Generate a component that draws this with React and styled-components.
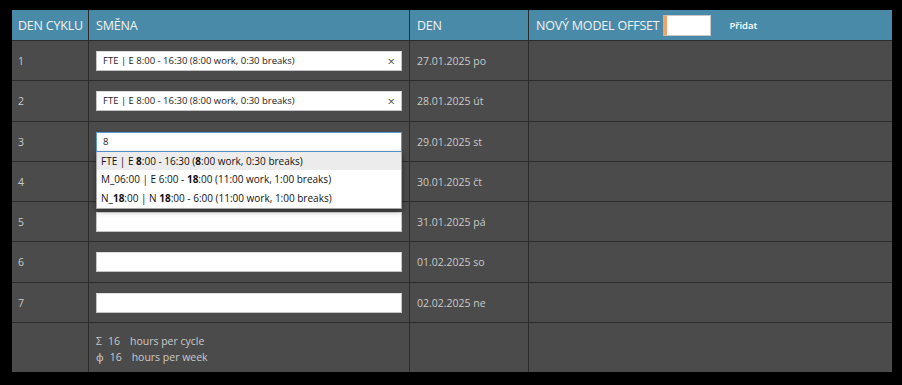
import styled, { createGlobalStyle } from "styled-components";

const GlobalStyle = createGlobalStyle`
  html, body {
    margin: 0;
    background: #000;
    font-family: "Open Sans", "Noto Sans", sans-serif;
  }
  #root {
    padding: 10px 0 0 12px;
  }
`;

const rows = [
  { day: 1, date: "27.01.2025 po", shift: "FTE | E 8:00 - 16:30 (8:00 work, 0:30 breaks)" },
  { day: 2, date: "28.01.2025 út", shift: "FTE | E 8:00 - 16:30 (8:00 work, 0:30 breaks)" },
  { day: 3, date: "29.01.2025 st", shift: "8", open: true },
  { day: 4, date: "30.01.2025 čt" },
  { day: 5, date: "31.01.2025 pá" },
  { day: 6, date: "01.02.2025 so" },
  { day: 7, date: "02.02.2025 ne" },
];

const options = [
  [["FTE | E ", false], ["8", true], [":00 - 16:30 (", false], ["8", true], [":00 work, 0:30 breaks)", false]],
  [["M_06:00 | E 6:00 - ", false], ["18", true], [":00 (11:00 work, 1:00 breaks)", false]],
  [["N_", false], ["18", true], [":00 | N ", false], ["18", true], [":00 - 6:00 (11:00 work, 1:00 breaks)", false]],
];

const App = () => {
  return (
    <>
      <GlobalStyle />
      <Table>
        <HeadCell>DEN CYKLU</HeadCell>
        <HeadCell>SMĚNA</HeadCell>
        <HeadCell>DEN</HeadCell>
        <HeadCell>
          NOVÝ MODEL OFFSET
          <OffsetInput />
          <AddButton>Přidat</AddButton>
        </HeadCell>
        {rows.map((r) => (
          <Row key={r.day}>
            <Cell>{r.day}</Cell>
            <ShiftCell>
              <Select $focused={r.open}>
                <SelectText>{r.shift || ""}</SelectText>
                {r.shift && !r.open && <Clear>×</Clear>}
              </Select>
              {r.open && (
                <Dropdown>
                  {options.map((opt, i) => (
                    <Option key={i} $active={i === 0}>
                      {opt.map(([t, b], j) => (b ? <b key={j}>{t}</b> : <span key={j}>{t}</span>))}
                    </Option>
                  ))}
                </Dropdown>
              )}
            </ShiftCell>
            <Cell>{r.date}</Cell>
            <Cell />
          </Row>
        ))}
        <FooterRow>
          <Cell />
          <Cell>
            <Sum>
              <span>Σ</span>
              <span>16</span>
              <span>hours per cycle</span>
            </Sum>
            <Sum>
              <span>ϕ</span>
              <span>16</span>
              <span>hours per week</span>
            </Sum>
          </Cell>
          <Cell />
          <Cell />
        </FooterRow>
      </Table>
    </>
  );
};

export default App;

const Table = styled.div`
  width: 880px;
  display: grid;
  grid-template-columns: 76px 321px 119px 364px;
  background: #4b4b4b;
`;

const HeadCell = styled.div`
  height: 30px;
  box-sizing: border-box;
  background: #4a8aa9;
  color: #f2f2f2;
  font-size: 12.5px;
  letter-spacing: -0.2px;
  white-space: nowrap;
  padding: 0 7px;
  display: flex;
  align-items: center;
  border-left: 1px solid #2b2b2b;
  &:first-child {
    border-left: none;
    padding-left: 6px;
  }
`;

const OffsetInput = styled.div`
  width: 43px;
  height: 19px;
  margin-left: 3px;
  background: #fff;
  border: 1px solid #c8c8c8;
  border-left: 4px solid #efa56a;
`;

const AddButton = styled.span`
  margin-left: 19px;
  font-size: 9.5px;
  font-weight: 600;
  color: #fff;
  letter-spacing: 0;
`;

const Row = styled.div`
  display: contents;
`;

const FooterRow = styled.div`
  display: contents;
  & > div {
    height: 50px;
    padding-top: 10px;
  }
`;

const Cell = styled.div`
  height: 40.3px;
  box-sizing: border-box;
  border-top: 1px solid #2b2b2b;
  border-left: 1px solid #2b2b2b;
  padding: 10px 7px 0;
  color: #c9c9c9;
  font-size: 10.5px;
  line-height: 20px;
  &:first-child {
    border-left: none;
    padding-left: 6px;
  }
`;

const ShiftCell = styled(Cell)`
  position: relative;
`;

const Select = styled.div`
  height: 20px;
  box-sizing: border-box;
  background: #fff;
  border: 1px solid ${(p) => (p.$focused ? "#5b9bd6" : "#c4c4c4")};
  border-top-color: ${(p) => (p.$focused ? "#5b9bd6" : "#dedede")};
  display: flex;
  align-items: center;
  padding: 0 6px;
  color: #222;
  font-size: 9.5px;
`;

const SelectText = styled.span`
  flex: 1;
`;

const Clear = styled.span`
  font-size: 13px;
  color: #555;
`;

const Dropdown = styled.div`
  position: absolute;
  left: 7px;
  right: 7px;
  top: 30px;
  background: #fff;
  border: 1px solid #a8a8a8;
  border-top: none;
  box-shadow: 0 2px 6px rgba(0, 0, 0, 0.4);
  z-index: 2;
  padding-bottom: 1px;
`;

const Option = styled.div`
  height: 18.5px;
  line-height: 18.5px;
  padding: 0 4px;
  font-size: 10px;
  color: #111;
  background: ${(p) => (p.$active ? "#ececec" : "#fff")};
  b {
    font-weight: 700;
  }
`;

const Sum = styled.div`
  display: flex;
  gap: 6px;
  line-height: 16px;
  font-size: 10.5px;
  span:nth-child(2) {
    width: 16px;
  }
`;
